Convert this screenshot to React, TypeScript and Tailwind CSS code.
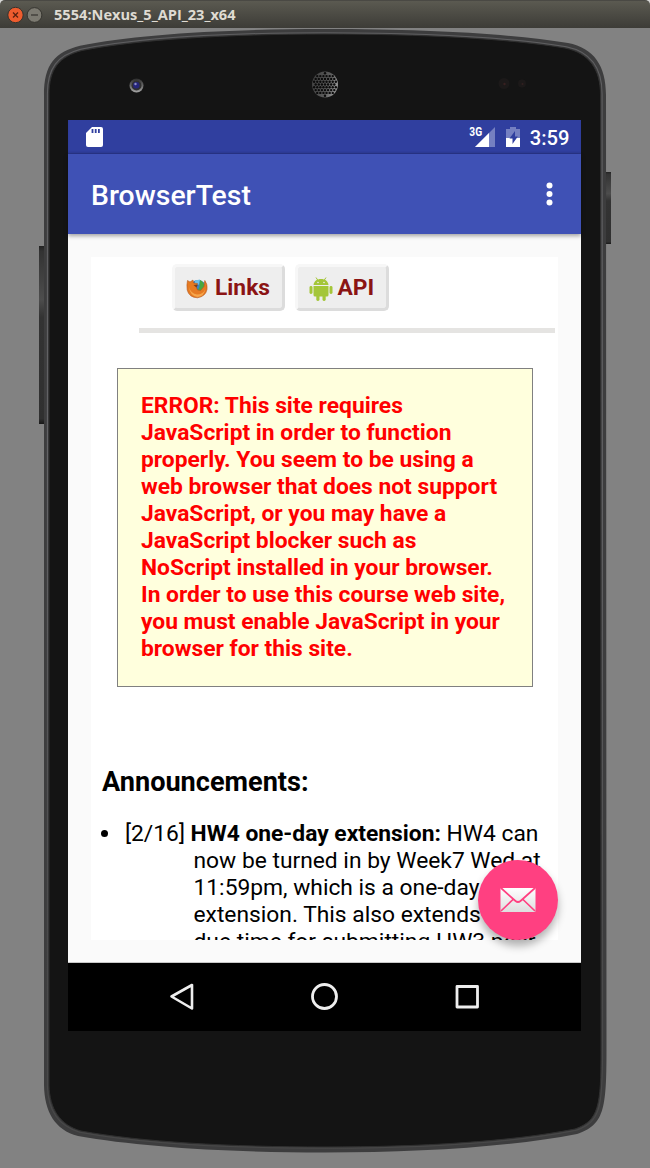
import React from "react";

const ERROR_LINES = [
  "ERROR: This site requires",
  "JavaScript in order to function",
  "properly. You seem to be using a",
  "web browser that does not support",
  "JavaScript, or you may have a",
  "JavaScript blocker such as",
  "NoScript installed in your browser.",
  "In order to use this course web site,",
  "you must enable JavaScript in your",
  "browser for this site.",
];

const OUTER =
  "M44 95 C44 64 55 52 80 45.7 C135 34.5 225 29 325 29 C425 29 510 33.5 568 43 C594 48 606 66 606 95 L606.5 1050 C606.5 1110 604 1125 577 1134 C510 1147 420 1152.5 325 1152.5 C230 1152.5 140 1147 78 1136 C55 1130 44.5 1112 44 1085 Z";
const INNER =
  "M49 95 C49 69 59 56.5 82 50.5 C137 39.5 227 34 325 34 C423 34 508 38.5 565 48 C589 53 600.5 69 600.5 95 L601 1050 C601 1106 599 1120.5 575 1129 C509 1142 420 1147 325 1147 C230 1147 141 1142 81 1131 C60 1125 49.5 1109 49 1085 Z";

function DeviceShell() {
  const holes: React.ReactNode[] = [];
  for (let r = -4; r <= 4; r++) {
    for (let c = -4; c <= 4; c++) {
      const x = c * 3.1 + (r % 2 ? 1.55 : 0);
      const y = r * 2.8;
      if (x * x + y * y < 132) {
        holes.push(<circle key={`${r}:${c}`} cx={325 + x} cy={84.5 + y} r="1.2" fill="#0b0b0b" />);
      }
    }
  }
  return (
    <svg className="absolute inset-0" width="650" height="1168" viewBox="0 0 650 1168">
      <defs>
        <linearGradient id="btn" x1="0" y1="0" x2="0" y2="1">
          <stop offset="0" stopColor="#222" />
          <stop offset="0.03" stopColor="#333" />
          <stop offset="0.3" stopColor="#4d4d4d" />
          <stop offset="0.4" stopColor="#333" />
          <stop offset="0.97" stopColor="#303030" />
          <stop offset="1" stopColor="#181818" />
        </linearGradient>
        <linearGradient id="rim" gradientUnits="userSpaceOnUse" x1="0" y1="29" x2="0" y2="1152">
          <stop offset="0" stopColor="#5e5e60" />
          <stop offset="0.4" stopColor="#68686b" />
          <stop offset="0.8" stopColor="#4c4c4d" />
          <stop offset="1" stopColor="#484848" />
        </linearGradient>
        <linearGradient id="ring" x1="0" y1="0" x2="0" y2="1">
          <stop offset="0" stopColor="#2c2c2c" />
          <stop offset="1" stopColor="#a5a5a5" />
        </linearGradient>
        <linearGradient id="mesh" x1="0" y1="0" x2="1" y2="0.3">
          <stop offset="0" stopColor="#3c3c3c" />
          <stop offset="0.7" stopColor="#5c5c5c" />
          <stop offset="1" stopColor="#909090" />
        </linearGradient>
      </defs>
      <rect x="39" y="246" width="7" height="178" fill="url(#btn)" />
      <rect x="604" y="172" width="7" height="72" fill="url(#btn)" />
      <path d={OUTER} fill="#3d3d3e" />
      <path d={INNER} fill="#141414" stroke="#303030" strokeWidth="1" />
      <path d={INNER} fill="none" stroke="url(#rim)" strokeWidth="1" transform="translate(325 590) scale(1.0058 1.0022) translate(-325 -590)" />
      <circle cx="136.500" cy="85.500" r="7" fill="url(#ring)" />
      <circle cx="136.500" cy="85.500" r="5" fill="#303030" />
      <circle cx="136.300" cy="85.300" r="3.200" fill="#25257a" />
      <circle cx="135.500" cy="84" r="1.200" fill="#8c8cc4" />
      <circle cx="325" cy="84.500" r="13" fill="url(#mesh)" />
      {holes}
      <circle cx="504" cy="83.500" r="5.500" fill="#1c1919" />
      <circle cx="504.500" cy="84" r="1.200" fill="#382020" />
      <circle cx="522" cy="83.500" r="4" fill="#1c1919" />
      <circle cx="522.500" cy="84" r="1" fill="#322020" />
    </svg>
  );
}

function TitleBar() {
  return (
    <header className="relative h-7 bg-[#d8d8d6]">
      <div className="flex h-7 items-center rounded-t-[5px] border-t border-[#4a4944] bg-linear-to-b from-[#5b5a51] to-[#3d3c37] pl-[7px]">
        <svg width="36" height="18" viewBox="0 0 36 18">
          <circle cx="8.500" cy="9" r="7.700" fill="#ee5c2e" stroke="#34332e" />
          <path d="M6 6.500l5 5m0-5l-5 5" stroke="#5a2110" strokeWidth="1.300" />
          <circle cx="27.500" cy="9" r="7.400" fill="#7c7a71" stroke="#34332e" />
          <path d="M24 9h7" stroke="#3a3933" strokeWidth="1.300" />
        </svg>
        <span className="ml-[11px] whitespace-nowrap pb-[2px] font-['Open_Sans',sans-serif] text-[14.6px] leading-5 font-bold text-[#dfdbd2]">
          5554:Nexus_5_API_23_x64
        </span>
      </div>
    </header>
  );
}

function StatusBar() {
  return (
    <div className="flex h-[34px] shrink-0 items-center justify-between bg-[#303f9f] pr-[11.5px] pl-[16.5px] shadow-[inset_0_-2px_2px_-1px_#26327f]">
      <svg width="18" height="22" viewBox="0 0 18 22">
        <path d="M7 1h9q2 0 2 2v16q0 2-2 2H3q-2 0-2-2V7z" fill="#fff" />
        <path d="M7.500 3v4m3.200-4v4m3.200-4v4" stroke="#303f9f" strokeWidth="1.800" />
      </svg>
      <div className="flex items-center text-white">
        <svg width="52" height="24" viewBox="0 0 52 24">
          <path d="M26 2v20H6z" fill="#7580c1" />
          <path d="M0 0h14v12H0z" fill="#303f9f" />
          <path d="M20 8v14H6z" fill="#fff" />
          <text x="0.300" y="11.300" fill="#fff" fontSize="12.500" fontWeight="700" textLength="12.800" lengthAdjust="spacingAndGlyphs" fontFamily="Roboto">
            3G
          </text>
          <path d="M41 2h6v2h4v9H37V4h4z" fill="#7580c1" />
          <path d="M37 13h14v9H37z" fill="#fff" />
          <path d="M46 6l-5.500 7.500h3V19l5.300-7.500h-2.800z" fill="#303f9f" />
        </svg>
        <span className="ml-[9px] pt-[2px] text-[20.2px] leading-6 font-medium">3:59</span>
      </div>
    </div>
  );
}

function Firefox() {
  return (
    <svg width="22" height="22" viewBox="0 0 22 22">
      <circle cx="12" cy="10" r="8" fill="#3b83c4" />
      <path d="M9 2.500l5-1-1 5-4 1z" fill="#6cc0ea" />
      <path d="M14 2q4.500 2 4.500 7l-3 5-4-1 2-4z" fill="#48a83f" />
      <path
        d="M1.500 2.500L4 4l3-2 .5 3 4 .5-1.500 3 1.500 3.500 3 .5 3.500-4 .8-6q3 4 2.200 9-1.500 7-9.500 8.300Q3 19.500 1.200 12 .5 7 1.500 2.500z"
        fill="#e67a22"
        stroke="#b4571c"
        strokeWidth=".6"
      />
      <path d="M3 9q2 7 8 7.500 6 0 8-5-.5 6.500-7.500 7.500Q4 18 3 9z" fill="#f7a64b" />
      <path d="M7.500 7l4.500-.5-1.500 3z" fill="#7c3d1c" />
    </svg>
  );
}

function Robot() {
  return (
    <svg width="24" height="24" viewBox="0 0 24 24" fill="#a4c639">
      <path d="M4.500 8C5 4 8 2 12 2s7 2 7.500 6z" />
      <path d="M7 .5l2 3M17 .5l-2 3" stroke="#a4c639" />
      <path d="M4.500 9h15v9q0 1.500-1.500 1.500H6Q4.500 19.500 4.500 18z" />
      <rect x="0.500" y="9" width="3" height="8" rx="1.400" />
      <rect x="20.500" y="9" width="3" height="8" rx="1.400" />
      <rect x="7.300" y="17" width="3.200" height="7" rx="1.400" />
      <rect x="13.500" y="17" width="3.200" height="7" rx="1.400" />
      <circle cx="9" cy="5.500" r=".8" fill="#eee" />
      <circle cx="15" cy="5.500" r=".8" fill="#eee" />
    </svg>
  );
}

const LINK_BUTTON =
  "flex h-[47px] items-center rounded-[5px] border-3 border-t-[#f7f7f7] border-r-[#dcdcdc] border-b-[#dcdcdc] border-l-[#f7f7f7] bg-[#eee] font-bold text-[#8b1414]";

function WebPage() {
  return (
    <main className="mx-[23px] mt-[23px] h-[683px] overflow-hidden bg-white text-[22.8px] leading-[27px] text-black">
      <nav className="flex gap-[10px] pt-[7px] pl-[81px]">
        <a className={LINK_BUTTON + " w-[113px] pl-[11px]"}>
          <span className="pt-[3px]"><Firefox /></span>
          <span className="ml-[7px]">Links</span>
        </a>
        <a className={LINK_BUTTON + " w-[94px] pl-[10.5px]"}>
          <span className="pt-[2px]"><Robot /></span>
          <span className="ml-[5px]">API</span>
        </a>
      </nav>
      <div className="mt-[17px] mr-[3px] ml-[48px] h-[5px] bg-[#e5e4e2]" />
      <section className="mt-[35px] ml-[25.5px] h-[318.5px] w-[416px] border-[1.5px] border-[#808080] bg-[#ffffdd] pt-[23px] pl-[23.5px] font-bold text-[#f00]">
        {ERROR_LINES.map((line) => (
          <p key={line} className="whitespace-nowrap">{line}</p>
        ))}
      </section>
      <h2 className="mt-[78.5px] ml-[11px] text-[27.1px] leading-[34px] font-bold">Announcements:</h2>
      <ul className="mt-[21px] flex pl-[10px]">
        <li className="flex whitespace-nowrap">
          <span className="mt-[10px] mr-[17px] size-[7px] shrink-0 rounded-full bg-black" />
          <div>
            <p>[2/16] <b>HW4 one-day extension:</b> HW4 can</p>
            <div className="pl-[68.5px]">
              <p>now be turned in by Week7 Wed at</p>
              <p>11:59pm, which is a one-day</p>
              <p>extension. This also extends the</p>
              <p>due time for submitting HW3 peer</p>
            </div>
          </div>
        </li>
      </ul>
    </main>
  );
}

function MailButton() {
  return (
    <button className="absolute top-[740px] left-[410px] flex size-20 items-center justify-center rounded-full bg-[#ff4081] shadow-[0_6px_9px_rgba(0,0,0,0.3)]">
      <svg width="36" height="26" viewBox="0 0 36 26">
        <defs>
          <linearGradient id="paper" x1="0" y1="0" x2="0" y2="1">
            <stop offset="0" stopColor="#fff" />
            <stop offset="1" stopColor="#dedede" />
          </linearGradient>
        </defs>
        <rect x="0.500" y="1" width="35" height="24" rx="1" fill="url(#paper)" />
        <path d="M1 1l14.500 13q2.500 2 5 0L35 1M1 24l12-11.500M35 24L23 12.500" fill="none" stroke="#ff4081" strokeWidth="1.700" />
      </svg>
    </button>
  );
}

function Screen() {
  return (
    <div className="relative mt-[92px] ml-[68px] flex h-[911px] w-[513px] flex-col bg-[#fafafa]">
      <StatusBar />
      <div className="flex h-20 shrink-0 items-center justify-between bg-[#3f51b5] pr-[28px] pl-[23px] text-white shadow-[0_2px_4px_rgba(0,0,0,0.35)]">
        <h1 className="pt-[3px] text-[28.4px] leading-8 font-medium">BrowserTest</h1>
        <svg width="7" height="24" viewBox="0 0 7 24" fill="#fff">
          <circle cx="3.500" cy="3.500" r="3" />
          <circle cx="3.500" cy="12" r="3" />
          <circle cx="3.500" cy="20.500" r="3" />
        </svg>
      </div>
      <WebPage />
      <MailButton />
      <nav className="mt-auto flex h-[69px] shrink-0 items-center justify-center gap-[114px] border-t border-[#c8c8c8] bg-black">
        <svg width="28" height="28" viewBox="0 0 28 28" fill="none" stroke="#eee" strokeWidth="2.600" strokeLinejoin="round">
          <path d="M2.500 13.500L23 2v23.500z" />
        </svg>
        <svg width="28" height="28" viewBox="0 0 28 28" fill="none" stroke="#eee" strokeWidth="2.800">
          <circle cx="13.500" cy="13.500" r="12" />
        </svg>
        <svg width="28" height="28" viewBox="0 0 28 28" fill="none" stroke="#eee" strokeWidth="2.800" strokeLinejoin="round">
          <path d="M4 3.500h20.500V24H4z" />
        </svg>
      </nav>
    </div>
  );
}

export default function App() {
  return (
    <div className="relative h-[1168px] w-[650px] overflow-hidden bg-[#828282] font-[Roboto,sans-serif]">
      <DeviceShell />
      <TitleBar />
      <Screen />
    </div>
  );
}
